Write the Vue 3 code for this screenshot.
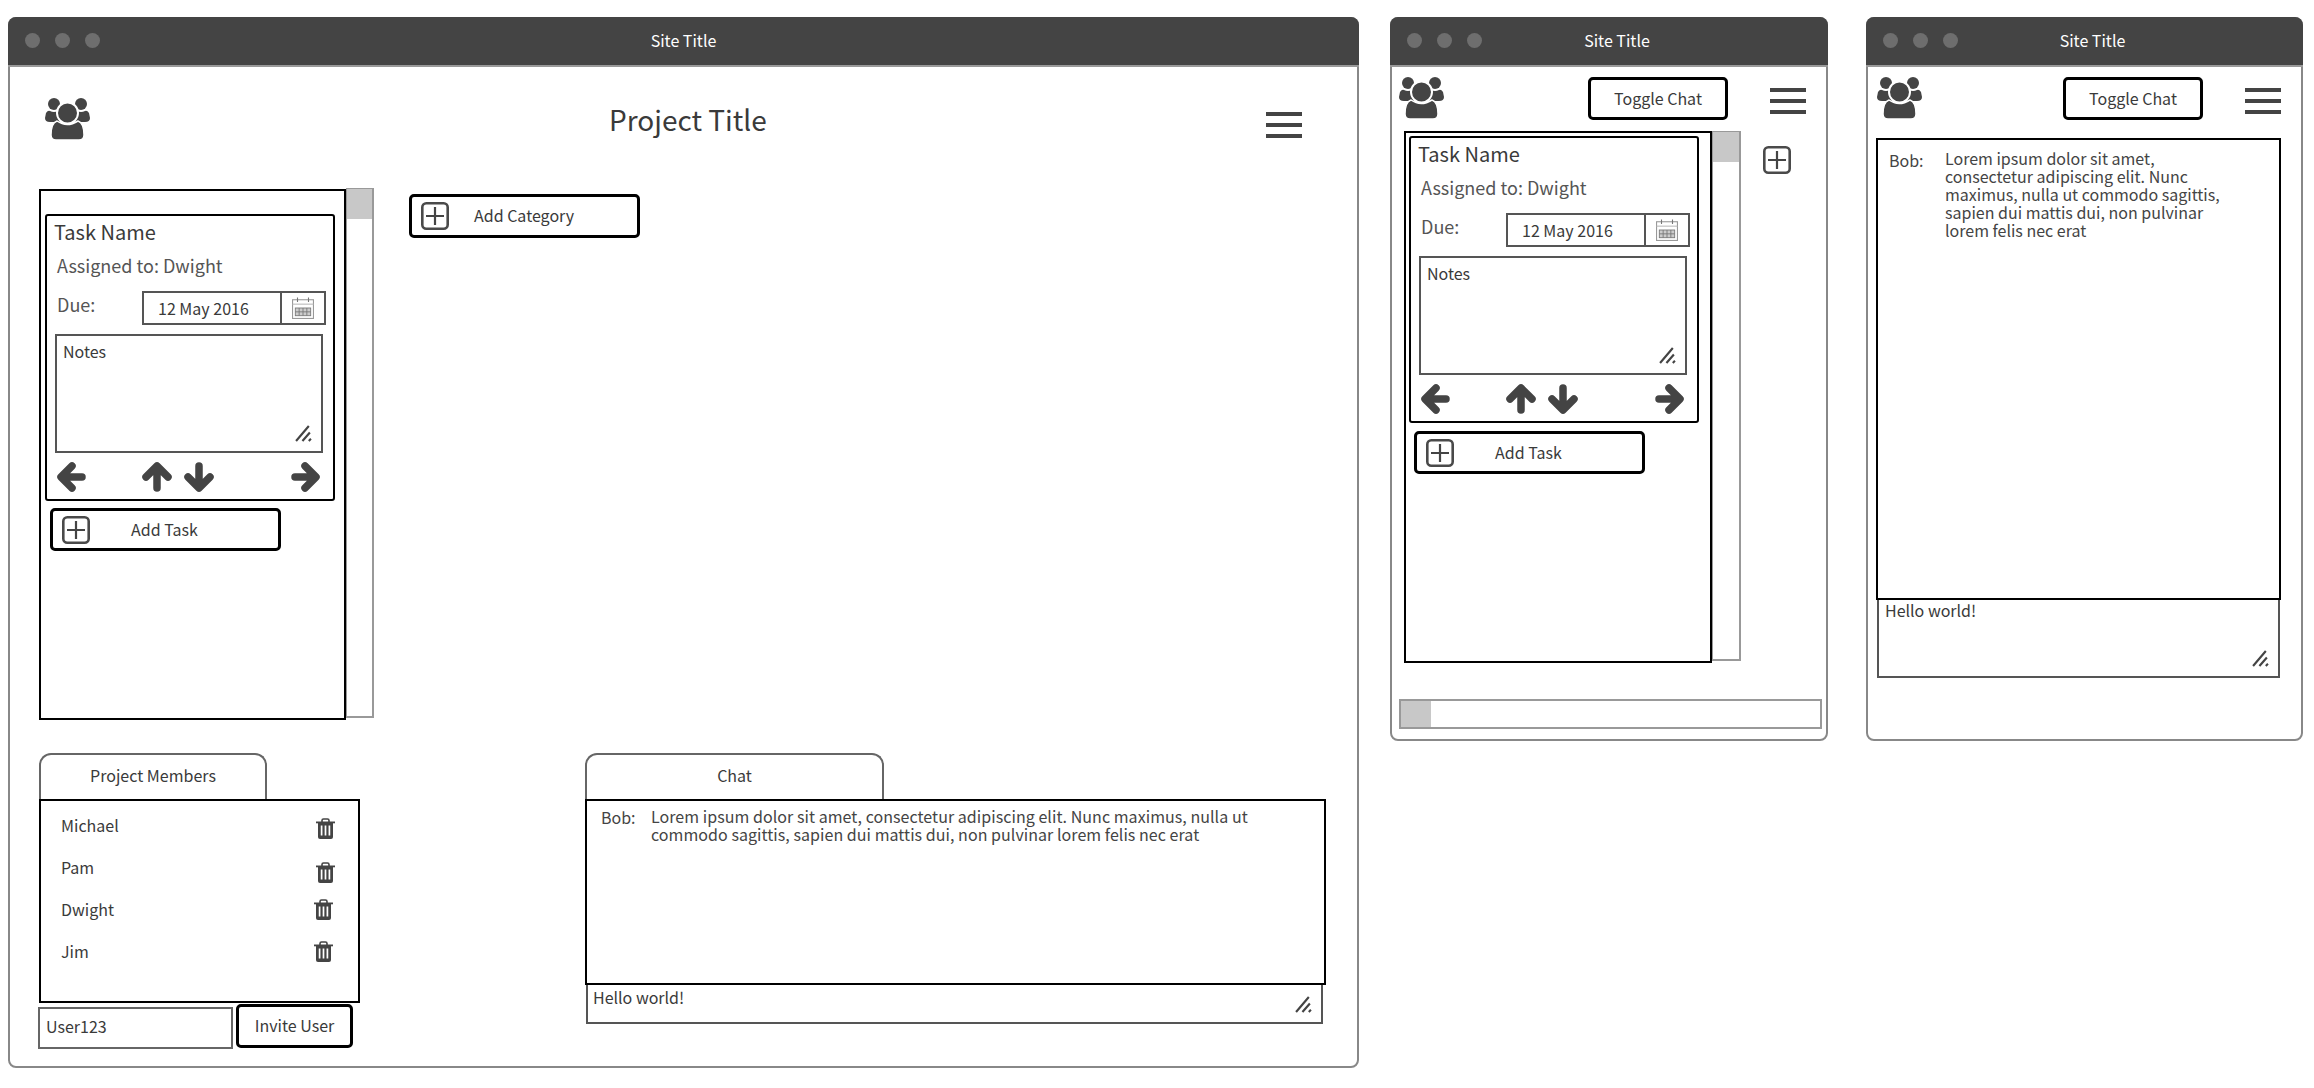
<template>
  <div class="canvas">
    <svg class="defs" aria-hidden="true">
      <symbol id="users" viewBox="0 0 45 42">
        <circle cx="9" cy="6" r="6" />
        <circle cx="36" cy="6" r="6" />
        <path d="M1 15 Q3 12 5 13 Q9 15 13 13 L15 24 L5 24 Q0 24 0 20Z" />
        <path d="M44 15 Q42 12 40 13 Q36 15 32 13 L30 24 L40 24 Q45 24 45 20Z" />
        <circle cx="22.5" cy="15" r="10.5" stroke="#fff" stroke-width="2" />
        <path d="M6 37 Q6 25 12 23 Q22 30 33 23 Q39 25 39 37 Q39 42 34 42 L11 42 Q6 42 6 37Z" stroke="#fff" stroke-width="1.5" />
      </symbol>
      <symbol id="plus" viewBox="0 0 28 28">
        <rect x="1.3" y="1.3" width="25.4" height="25.4" rx="4" fill="none" stroke="#4a4a4a" stroke-width="2.6" />
        <path d="M14 5v18M5 14h18" fill="none" stroke="#444" stroke-width="2.2" />
      </symbol>
      <symbol id="left" viewBox="0 0 30 32">
        <path d="M26 16H6M16 5 5 16l11 11" fill="none" stroke="#444" stroke-width="7.5" stroke-linecap="round" stroke-linejoin="round" />
      </symbol>
      <symbol id="right" viewBox="0 0 30 32">
        <path d="M4 16h20M14 5l11 11-11 11" fill="none" stroke="#444" stroke-width="7.5" stroke-linecap="round" stroke-linejoin="round" />
      </symbol>
      <symbol id="up" viewBox="0 0 32 32">
        <path d="M16 27V6M5 16 16 5l11 11" fill="none" stroke="#444" stroke-width="7.5" stroke-linecap="round" stroke-linejoin="round" />
      </symbol>
      <symbol id="down" viewBox="0 0 32 32">
        <path d="M16 5v21M5 16l11 11 11-11" fill="none" stroke="#444" stroke-width="7.5" stroke-linecap="round" stroke-linejoin="round" />
      </symbol>
      <symbol id="trash" viewBox="0 0 19 21">
        <path d="M6 4V2.5Q6 1 7.5 1h4Q13 1 13 2.5V4" fill="none" stroke="#444" stroke-width="1.6" />
        <path d="M0 3.5h19v1.8H0z" />
        <path d="M2 5h15v14q0 2-2 2H4q-2 0-2-2z" />
        <path d="M5.6 7.5v10M9.5 7.5v10M13.4 7.5v10" fill="none" stroke="#fff" stroke-width="1.7" />
      </symbol>
      <symbol id="calendar" viewBox="0 0 20 20">
        <rect x=".5" y="2.5" width="19" height="17" fill="#fff" stroke="#999" />
        <path d="M5 .5v4M15 .5v4" stroke="#777" fill="none" />
        <path d="M.5 6.5h19" stroke="#bbb" fill="none" />
        <rect x="3" y="10" width="14" height="7" fill="#ccc" stroke="#777" stroke-width=".8" />
        <path d="M6.5 10v7M10 10v7M13.5 10v7M3 13.5h14" stroke="#777" stroke-width=".8" fill="none" />
      </symbol>
      <symbol id="grip" viewBox="0 0 16 16">
        <path d="M1 15 13 1M7 15l7-8M13 15l2-2" fill="none" stroke="#444" stroke-width="2" />
      </symbol>
    </svg>

    <!-- desktop -->
    <section class="window main">
      <div class="titlebar">
        <span class="dots"><i></i><i></i><i></i></span>
        <span class="site">Site Title</span>
      </div>
      <div class="main-body">
        <header class="main-head">
          <svg class="logo"><use href="#users" /></svg>
          <h1 class="project">Project Title</h1>
          <div class="burger"><i></i><i></i><i></i></div>
        </header>

        <div class="board">
          <div class="column spaced">
            <div class="task">
              <div class="task-name">Task Name</div>
              <div class="assigned">Assigned to: Dwight</div>
              <div class="due-row">
                <span class="due">Due:</span>
                <div class="date">
                  <span>12 May 2016</span>
                  <b><svg class="cal"><use href="#calendar" /></svg></b>
                </div>
              </div>
              <div class="notes">
                Notes
                <svg class="grip"><use href="#grip" /></svg>
              </div>
              <div class="arrows">
                <svg class="arrow"><use href="#left" /></svg>
                <svg class="arrow up"><use href="#up" /></svg>
                <svg class="arrow down"><use href="#down" /></svg>
                <svg class="arrow"><use href="#right" /></svg>
              </div>
            </div>
            <button class="btn add-task">
              <svg class="plus"><use href="#plus" /></svg>
              <span>Add Task</span>
            </button>
          </div>
          <div class="scrollbar"><i></i></div>
          <button class="btn add-category">
            <svg class="plus"><use href="#plus" /></svg>
            <span>Add Category</span>
          </button>
        </div>

        <div class="bottom">
          <div class="members">
            <div class="tab members-tab">Project Members</div>
            <ul class="member-list">
              <li v-for="m in members" :key="m.name">
                <span>{{ m.name }}</span>
                <svg class="trash" :style="{ transform: `translate(${m.dx}px, ${m.dy}px)` }"><use href="#trash" /></svg>
              </li>
            </ul>
            <div class="invite">
              <div class="user-input">User123</div>
              <button class="btn invite-btn">Invite User</button>
            </div>
          </div>

          <div class="chat">
            <div class="tab chat-tab">Chat</div>
            <div class="messages wide-msg">
              <span class="who">Bob:</span>
              <p class="msg">{{ lorem }}</p>
            </div>
            <div class="reply wide-reply">
              Hello world!
              <svg class="grip"><use href="#grip" /></svg>
            </div>
          </div>
        </div>
      </div>
    </section>

    <!-- phone, board -->
    <section class="window phone board-phone">
      <div class="titlebar">
        <span class="dots"><i></i><i></i><i></i></span>
        <span class="site">Site Title</span>
      </div>
      <header class="phone-head">
        <svg class="logo"><use href="#users" /></svg>
        <button class="btn toggle">Toggle Chat</button>
        <div class="burger"><i></i><i></i><i></i></div>
      </header>
      <div class="phone-board">
        <div class="column tight">
          <div class="task">
            <div class="task-name">Task Name</div>
            <div class="assigned">Assigned to: Dwight</div>
            <div class="due-row">
              <span class="due">Due:</span>
              <div class="date">
                <span>12 May 2016</span>
                <b><svg class="cal"><use href="#calendar" /></svg></b>
              </div>
            </div>
            <div class="notes">
              Notes
              <svg class="grip"><use href="#grip" /></svg>
            </div>
            <div class="arrows">
              <svg class="arrow"><use href="#left" /></svg>
              <svg class="arrow up"><use href="#up" /></svg>
              <svg class="arrow down"><use href="#down" /></svg>
              <svg class="arrow"><use href="#right" /></svg>
            </div>
          </div>
          <button class="btn add-task">
            <svg class="plus"><use href="#plus" /></svg>
            <span>Add Task</span>
          </button>
        </div>
        <div class="scrollbar"><i></i></div>
        <svg class="plus lone"><use href="#plus" /></svg>
      </div>
      <div class="hscroll"><i></i></div>
    </section>

    <!-- phone, chat -->
    <section class="window phone chat-phone">
      <div class="titlebar">
        <span class="dots"><i></i><i></i><i></i></span>
        <span class="site">Site Title</span>
      </div>
      <header class="phone-head">
        <svg class="logo"><use href="#users" /></svg>
        <button class="btn toggle">Toggle Chat</button>
        <div class="burger"><i></i><i></i><i></i></div>
      </header>
      <div class="messages narrow-msg">
        <span class="who">Bob:</span>
        <p class="msg">{{ lorem }}</p>
      </div>
      <div class="reply narrow-reply">
        Hello world!
        <svg class="grip"><use href="#grip" /></svg>
      </div>
    </section>
  </div>
</template>

<script setup>
const lorem = 'Lorem ipsum dolor sit amet, consectetur adipiscing elit. Nunc maximus, nulla ut commodo sagittis, sapien dui mattis dui, non pulvinar lorem felis nec erat'

// the trash icons are not quite in line in the wireframe
const members = [
  { name: 'Michael', dx: 0, dy: 3 },
  { name: 'Pam', dx: 0, dy: 5 },
  { name: 'Dwight', dx: -2, dy: 0 },
  { name: 'Jim', dx: -2, dy: 0 },
]
</script>

<style>
* {
  box-sizing: border-box;
}
html, body {
  background: #fff;
}
</style>

<style scoped>
.canvas {
  display: flex;
  align-items: flex-start;
  width: 2314px;
  height: 1088px;
  padding: 17px 0 0 8px;
  overflow: hidden;
  font-family: "Noto Sans CJK SC", "Noto Sans", sans-serif;
  font-size: 16px;
  color: #3a3a3a;
}
.defs {
  position: absolute;
  width: 0;
  height: 0;
}
.defs symbol {
  fill: #444;
}
.window {
  border: 2px solid #888;
  border-radius: 8px;
  background: #fff;
  flex: none;
}
.main {
  width: 1351px;
  height: 1051px;
}
.phone {
  height: 724px;
}
.board-phone {
  width: 438px;
  margin-left: 31px;
}
.chat-phone {
  width: 437px;
  margin-left: 38px;
}
.titlebar {
  position: relative;
  display: flex;
  align-items: center;
  justify-content: center;
  height: 50px;
  margin: -2px -2px 0;
  padding-bottom: 2px;
  border-radius: 8px 8px 0 0;
  background: #444;
  border-bottom: 2px solid #999;
  color: #fff;
  font-size: 16px;
}
.phone .site {
  padding-left: 16px;
}
.dots {
  position: absolute;
  left: 17px;
  top: 16px;
  display: flex;
  gap: 15px;
}
.dots i {
  width: 15px;
  height: 15px;
  border-radius: 50%;
  background: #6e6e6e;
}
.main-body {
  padding: 0 0 0 29px;
}
.main-head {
  display: flex;
  align-items: flex-start;
  height: 73px;
  padding-top: 31px;
}
.logo {
  flex: none;
  width: 45px;
  height: 42px;
}
.main-head .logo {
  margin-left: 6px;
}
.project {
  margin: -1px 0 0 519px;
  font-size: 28px;
  font-weight: 400;
  line-height: 44px;
}
.burger {
  display: flex;
  flex-direction: column;
  justify-content: space-between;
  width: 36px;
  height: 26px;
}
.burger i {
  height: 4px;
  background: #444;
}
.main-head .burger {
  margin: 14px 55px 0 auto;
}
.board {
  display: flex;
  align-items: flex-start;
  height: 565px;
  margin-top: 48px;
}
.column {
  flex: none;
  border: 2px solid #000;
}
.column.spaced {
  width: 307px;
  height: 531px;
  margin-top: 1px;
  padding: 23px 0 0 4px;
}
.column.tight {
  width: 308px;
  height: 532px;
  padding: 3px 0 0 3px;
}
.column.tight .add-task {
  margin-top: 8px;
}
.scrollbar {
  flex: none;
  width: 28px;
  height: 530px;
  border: 2px solid #999;
  border-left-width: 1px;
}
.phone-board .scrollbar {
  width: 29px;
}
.scrollbar i {
  display: block;
  height: 30px;
  margin-top: -1px;
  background: #c8c8c8;
}
.task {
  width: 290px;
  height: 287px;
  padding: 3px 7px 0 8px;
  border: 2px solid #000;
  border-radius: 3px;
}
.task-name {
  margin-left: -1px;
  font-size: 20px;
  line-height: 26px;
}
.assigned {
  margin: 8px 0 0 2px;
  font-size: 18px;
  line-height: 24px;
  color: #555;
}
.due-row {
  display: flex;
  margin-top: 14px;
}
.due {
  width: 86px;
  margin-left: 2px;
  font-size: 18px;
  line-height: 26px;
  color: #555;
}
.date {
  display: flex;
  flex: none;
  width: 184px;
  height: 34px;
  border: 2px solid #555;
  line-height: 29px;
}
.date span {
  flex: 1;
  padding: 1px 0 0 14px;
}
.date b {
  display: flex;
  align-items: center;
  justify-content: center;
  width: 44px;
  border-left: 2px solid #555;
}
.cal {
  width: 22px;
  height: 22px;
}
.notes {
  position: relative;
  width: 268px;
  height: 119px;
  margin-top: 9px;
  padding: 4px 0 0 6px;
  border: 2px solid #555;
  line-height: 22px;
}
.grip {
  position: absolute;
  right: 9px;
  bottom: 9px;
  width: 17px;
  height: 17px;
}
.arrows {
  display: flex;
  margin-top: 8px;
}
.arrow {
  flex: none;
  width: 30px;
  height: 32px;
  margin-left: 1px;
}
.arrow.up {
  width: 32px;
  margin-left: 55px;
}
.arrow.down {
  width: 32px;
  margin-left: 10px;
}
.arrow:last-child {
  margin-left: 76px;
}
.btn {
  display: block;
  padding: 0;
  border: 3px solid #000;
  border-radius: 5px;
  background: #fff;
  font: inherit;
  color: #3a3a3a;
}
.add-task,
.add-category {
  display: flex;
  align-items: center;
  height: 43px;
  padding-left: 9px;
}
.btn span {
  padding-bottom: 2px;
}
.add-task {
  width: 231px;
  margin: 7px 0 0 5px;
}
.add-task span {
  margin-left: 41px;
}
.add-category {
  width: 231px;
  height: 44px;
  margin: 6px 0 0 35px;
}
.add-category span {
  margin-left: 25px;
}
.plus {
  flex: none;
  width: 28px;
  height: 28px;
}
.plus.lone {
  margin: 15px 0 0 22px;
}
.bottom {
  display: flex;
  align-items: flex-start;
  gap: 225px;
}
.members {
  width: 321px;
}
.tab {
  display: flex;
  align-items: center;
  justify-content: center;
  height: 46px;
  border: 2px solid #666;
  border-bottom: 0;
  border-radius: 12px 12px 0 0;
  padding-bottom: 5px;
}
.members-tab {
  width: 228px;
}
.member-list {
  height: 204px;
  margin: 0;
  padding: 3px 18px 0 20px;
  border: 2px solid #000;
  list-style: none;
}
.member-list li {
  display: flex;
  align-items: center;
  justify-content: space-between;
  height: 42px;
  padding-right: 5px;
}
.trash {
  width: 19px;
  height: 21px;
}
.invite {
  display: flex;
  margin: 1px 0 0 -1px;
}
.user-input {
  width: 195px;
  height: 42px;
  margin-top: 3px;
  padding-left: 6px;
  border: 2px solid #666;
  line-height: 35px;
}
.invite-btn {
  width: 117px;
  height: 44px;
  margin-left: 3px;
  padding-bottom: 2px;
}
.chat {
  width: 741px;
}
.chat-tab {
  width: 299px;
}
.messages {
  display: flex;
  border: 2px solid #000;
  line-height: 18px;
  color: #444;
}
.who {
  flex: none;
}
.msg {
  margin: 0;
}
.wide-msg {
  height: 186px;
  padding: 6px 0 0 14px;
}
.wide-msg .who {
  width: 50px;
  margin-top: 1px;
}
.wide-msg .msg {
  width: 640px;
  letter-spacing: 0.05px;
}
.narrow-msg {
  width: 405px;
  height: 462px;
  margin: 7px 0 0 8px;
  padding: 9px 0 0 11px;
}
.narrow-msg .who {
  width: 56px;
  margin-top: 2px;
}
.narrow-msg .msg {
  width: 285px;
}
.reply {
  position: relative;
  border: 2px solid #555;
  border-top: 0;
  line-height: 18px;
}
.wide-reply {
  width: 737px;
  height: 39px;
  margin-left: 1px;
  padding: 3px 0 0 5px;
}
.narrow-reply {
  width: 403px;
  height: 78px;
  margin-left: 9px;
  padding: 1px 0 0 6px;
}
.phone-head {
  display: flex;
  align-items: flex-start;
  height: 64px;
  padding-top: 10px;
}
.phone-head .logo {
  margin-left: 9px;
}
.board-phone .logo {
  margin-left: 7px;
}
.toggle {
  width: 140px;
  height: 43px;
  padding-bottom: 2px;
}
.phone-head .burger {
  margin: 11px 0 0 42px;
}
.board-phone .toggle {
  margin-left: 144px;
}
.chat-phone .toggle {
  margin-left: 141px;
}
.phone-board {
  display: flex;
  align-items: flex-start;
  height: 568px;
  padding-left: 12px;
}
.hscroll {
  width: 423px;
  height: 30px;
  margin-left: 7px;
  border: 2px solid #999;
}
.hscroll i {
  display: block;
  width: 30px;
  height: 100%;
  background: #c8c8c8;
}
</style>
